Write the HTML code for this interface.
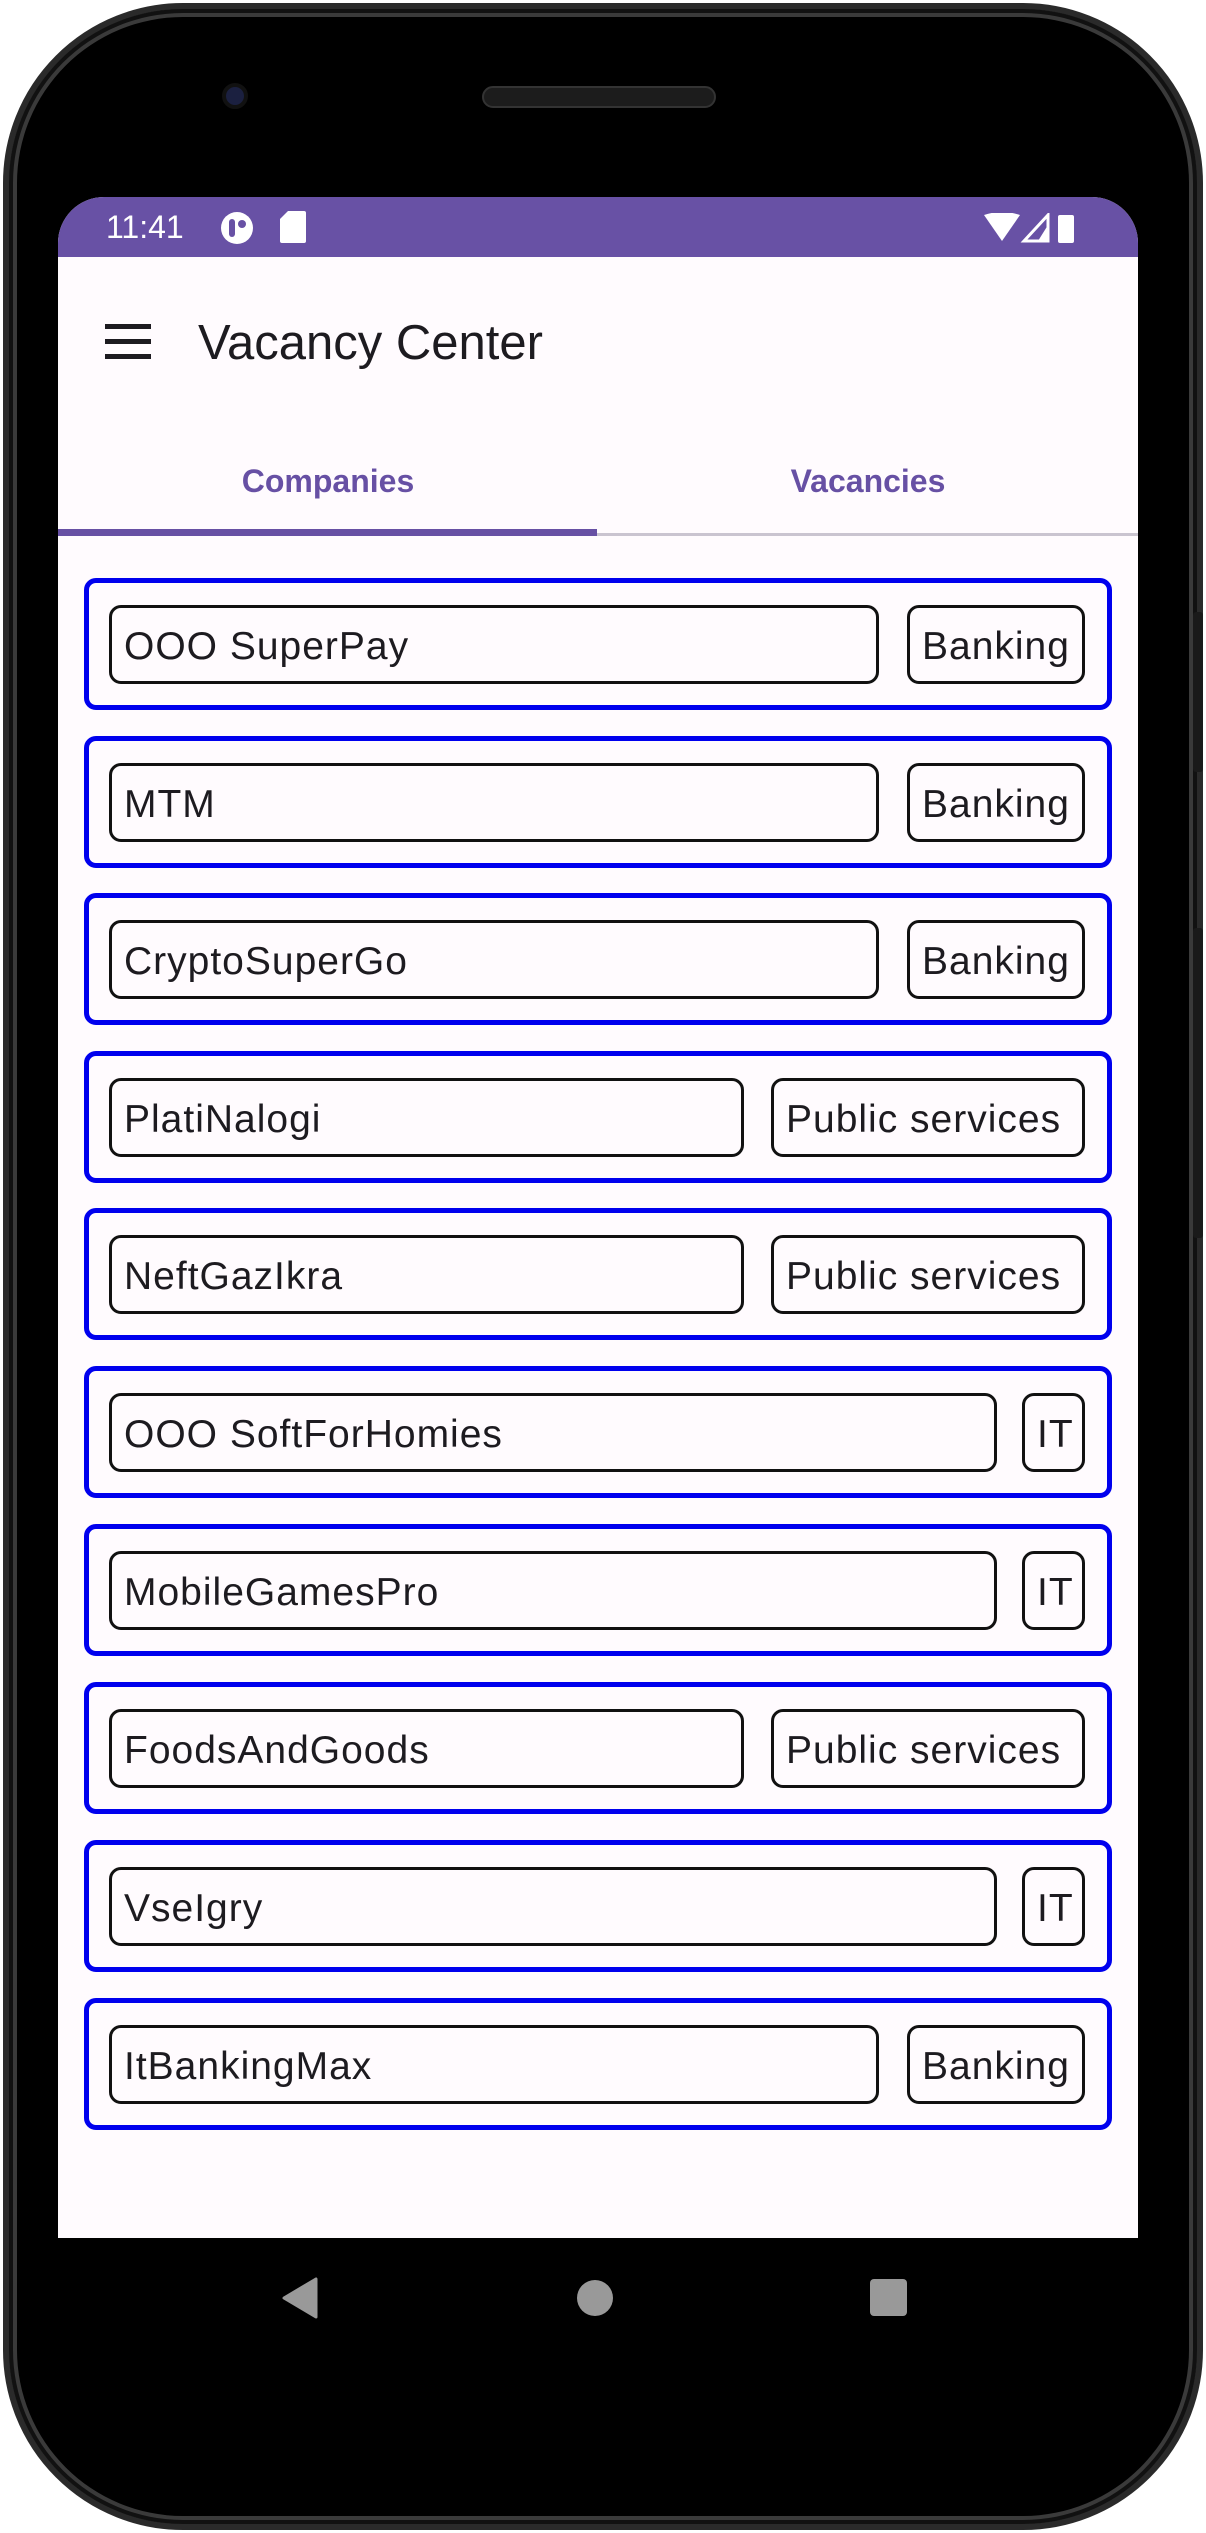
<!DOCTYPE html>
<html><head><meta charset="utf-8"><style>
*{margin:0;padding:0;box-sizing:border-box}
body{width:1206px;height:2533px;background:#fff;position:relative;overflow:hidden;font-family:"Liberation Sans",sans-serif}
.phone{position:absolute;left:3px;top:3px;width:1200px;height:2527px;background:#000;border-radius:180px;border:6px solid #2a2a2a;box-shadow:inset 0 0 0 4px #111,inset 0 0 0 8px #3a3a3a}
.btn{position:absolute;background:#1a1a1a;left:1193px;width:10px;border-radius:3px}
.screen{position:absolute;left:58px;top:197px;width:1080px;height:2041px;background:#fffbfe;border-radius:46px 46px 0 0;overflow:hidden}
.status{height:60px;background:#6851a5;position:relative;color:#fff}
.time{position:absolute;left:48px;top:12px;font-size:32px}
.title{position:absolute;left:140px;top:118px;font-size:49px;color:#1d1b20}
.ham{position:absolute;left:47px;top:127px;width:46px}
.ham div{height:5px;background:#1d1b20;margin-bottom:10px}
.tab{position:absolute;top:266px;font-size:32px;color:#6750a4;font-weight:bold;width:540px;text-align:center}
.ind{position:absolute;left:0;top:332px;width:539px;height:7px;background:#6750a4}
.div{position:absolute;left:0;top:336px;width:1080px;height:3px;background:#cac4d0}
.card{position:absolute;left:26px;width:1028px;height:132px;border:5px solid #0000ee;border-radius:12px}
.f,.c{position:absolute;top:22px;height:79px;border:3px solid #111;border-radius:12px;font-size:39px;color:#1d1b20;line-height:77px;padding-left:12px;letter-spacing:1px}
.f{left:20px}
</style></head><body>
<div class="phone"></div>
<div class="btn" style="top:612px;height:160px"></div>
<div class="btn" style="top:928px;height:310px"></div>
<div style="position:absolute;left:222px;top:83px;width:26px;height:26px;border-radius:50%;background:#1b2040;border:4px solid #111"></div>
<div style="position:absolute;left:482px;top:86px;width:234px;height:22px;border-radius:11px;background:#1c1c1c;border:2px solid #333"></div>
<div class="screen">
<div class="status"><span class="time">11:41</span>
<svg style="position:absolute;left:162px;top:14px" width="34" height="34" viewBox="0 0 34 34"><circle cx="17" cy="17" r="16" fill="#fff"/><rect x="9" y="8" width="6" height="18" rx="3" fill="#6851a5"/><circle cx="22" cy="13" r="4" fill="#6851a5"/></svg>
<svg style="position:absolute;left:222px;top:14px" width="26" height="32" viewBox="0 0 26 32"><path d="M8 0H24a2 2 0 0 1 2 2V30a2 2 0 0 1-2 2H2a2 2 0 0 1-2-2V8Z" fill="#fff"/></svg>
<svg style="position:absolute;left:926px;top:16px" width="90" height="30" viewBox="0 0 90 30"><path d="M0 2Q18-4 36 2L18 28Z" fill="#fff"/><path d="M64 2V28H40Z" fill="none" stroke="#fff" stroke-width="3"/><path d="M64 12V28H54Z" fill="#fff"/><rect x="74" y="2" width="16" height="28" rx="2" fill="#fff"/></svg>
</div>
<div class="ham"><div></div><div></div><div></div></div>
<div class="title">Vacancy Center</div>
<div class="tab" style="left:0">Companies</div>
<div class="tab" style="left:540px">Vacancies</div>
<div class="div"></div><div class="ind"></div>

<div class="card" style="top:381px"><div class="f" style="width:770px">OOO SuperPay</div><div class="c" style="left:818px;width:178px">Banking</div></div>
<div class="card" style="top:539px"><div class="f" style="width:770px">MTM</div><div class="c" style="left:818px;width:178px">Banking</div></div>
<div class="card" style="top:696px"><div class="f" style="width:770px">CryptoSuperGo</div><div class="c" style="left:818px;width:178px">Banking</div></div>
<div class="card" style="top:854px"><div class="f" style="width:635px">PlatiNalogi</div><div class="c" style="left:682px;width:314px">Public services</div></div>
<div class="card" style="top:1011px"><div class="f" style="width:635px">NeftGazIkra</div><div class="c" style="left:682px;width:314px">Public services</div></div>
<div class="card" style="top:1169px"><div class="f" style="width:888px">OOO SoftForHomies</div><div class="c" style="left:933px;width:63px">IT</div></div>
<div class="card" style="top:1327px"><div class="f" style="width:888px">MobileGamesPro</div><div class="c" style="left:933px;width:63px">IT</div></div>
<div class="card" style="top:1485px"><div class="f" style="width:635px">FoodsAndGoods</div><div class="c" style="left:682px;width:314px">Public services</div></div>
<div class="card" style="top:1643px"><div class="f" style="width:888px">VseIgry</div><div class="c" style="left:933px;width:63px">IT</div></div>
<div class="card" style="top:1801px"><div class="f" style="width:770px">ItBankingMax</div><div class="c" style="left:818px;width:178px">Banking</div></div>
</div>
<svg style="position:absolute;left:280px;top:2277px" width="40" height="42" viewBox="0 0 40 42"><path d="M36 2V40L4 21Z" fill="#999" stroke="#999" stroke-width="3" stroke-linejoin="round"/></svg>
<div style="position:absolute;left:577px;top:2280px;width:36px;height:36px;border-radius:50%;background:#999"></div>
<div style="position:absolute;left:870px;top:2279px;width:37px;height:37px;border-radius:4px;background:#999"></div>
</body></html>
